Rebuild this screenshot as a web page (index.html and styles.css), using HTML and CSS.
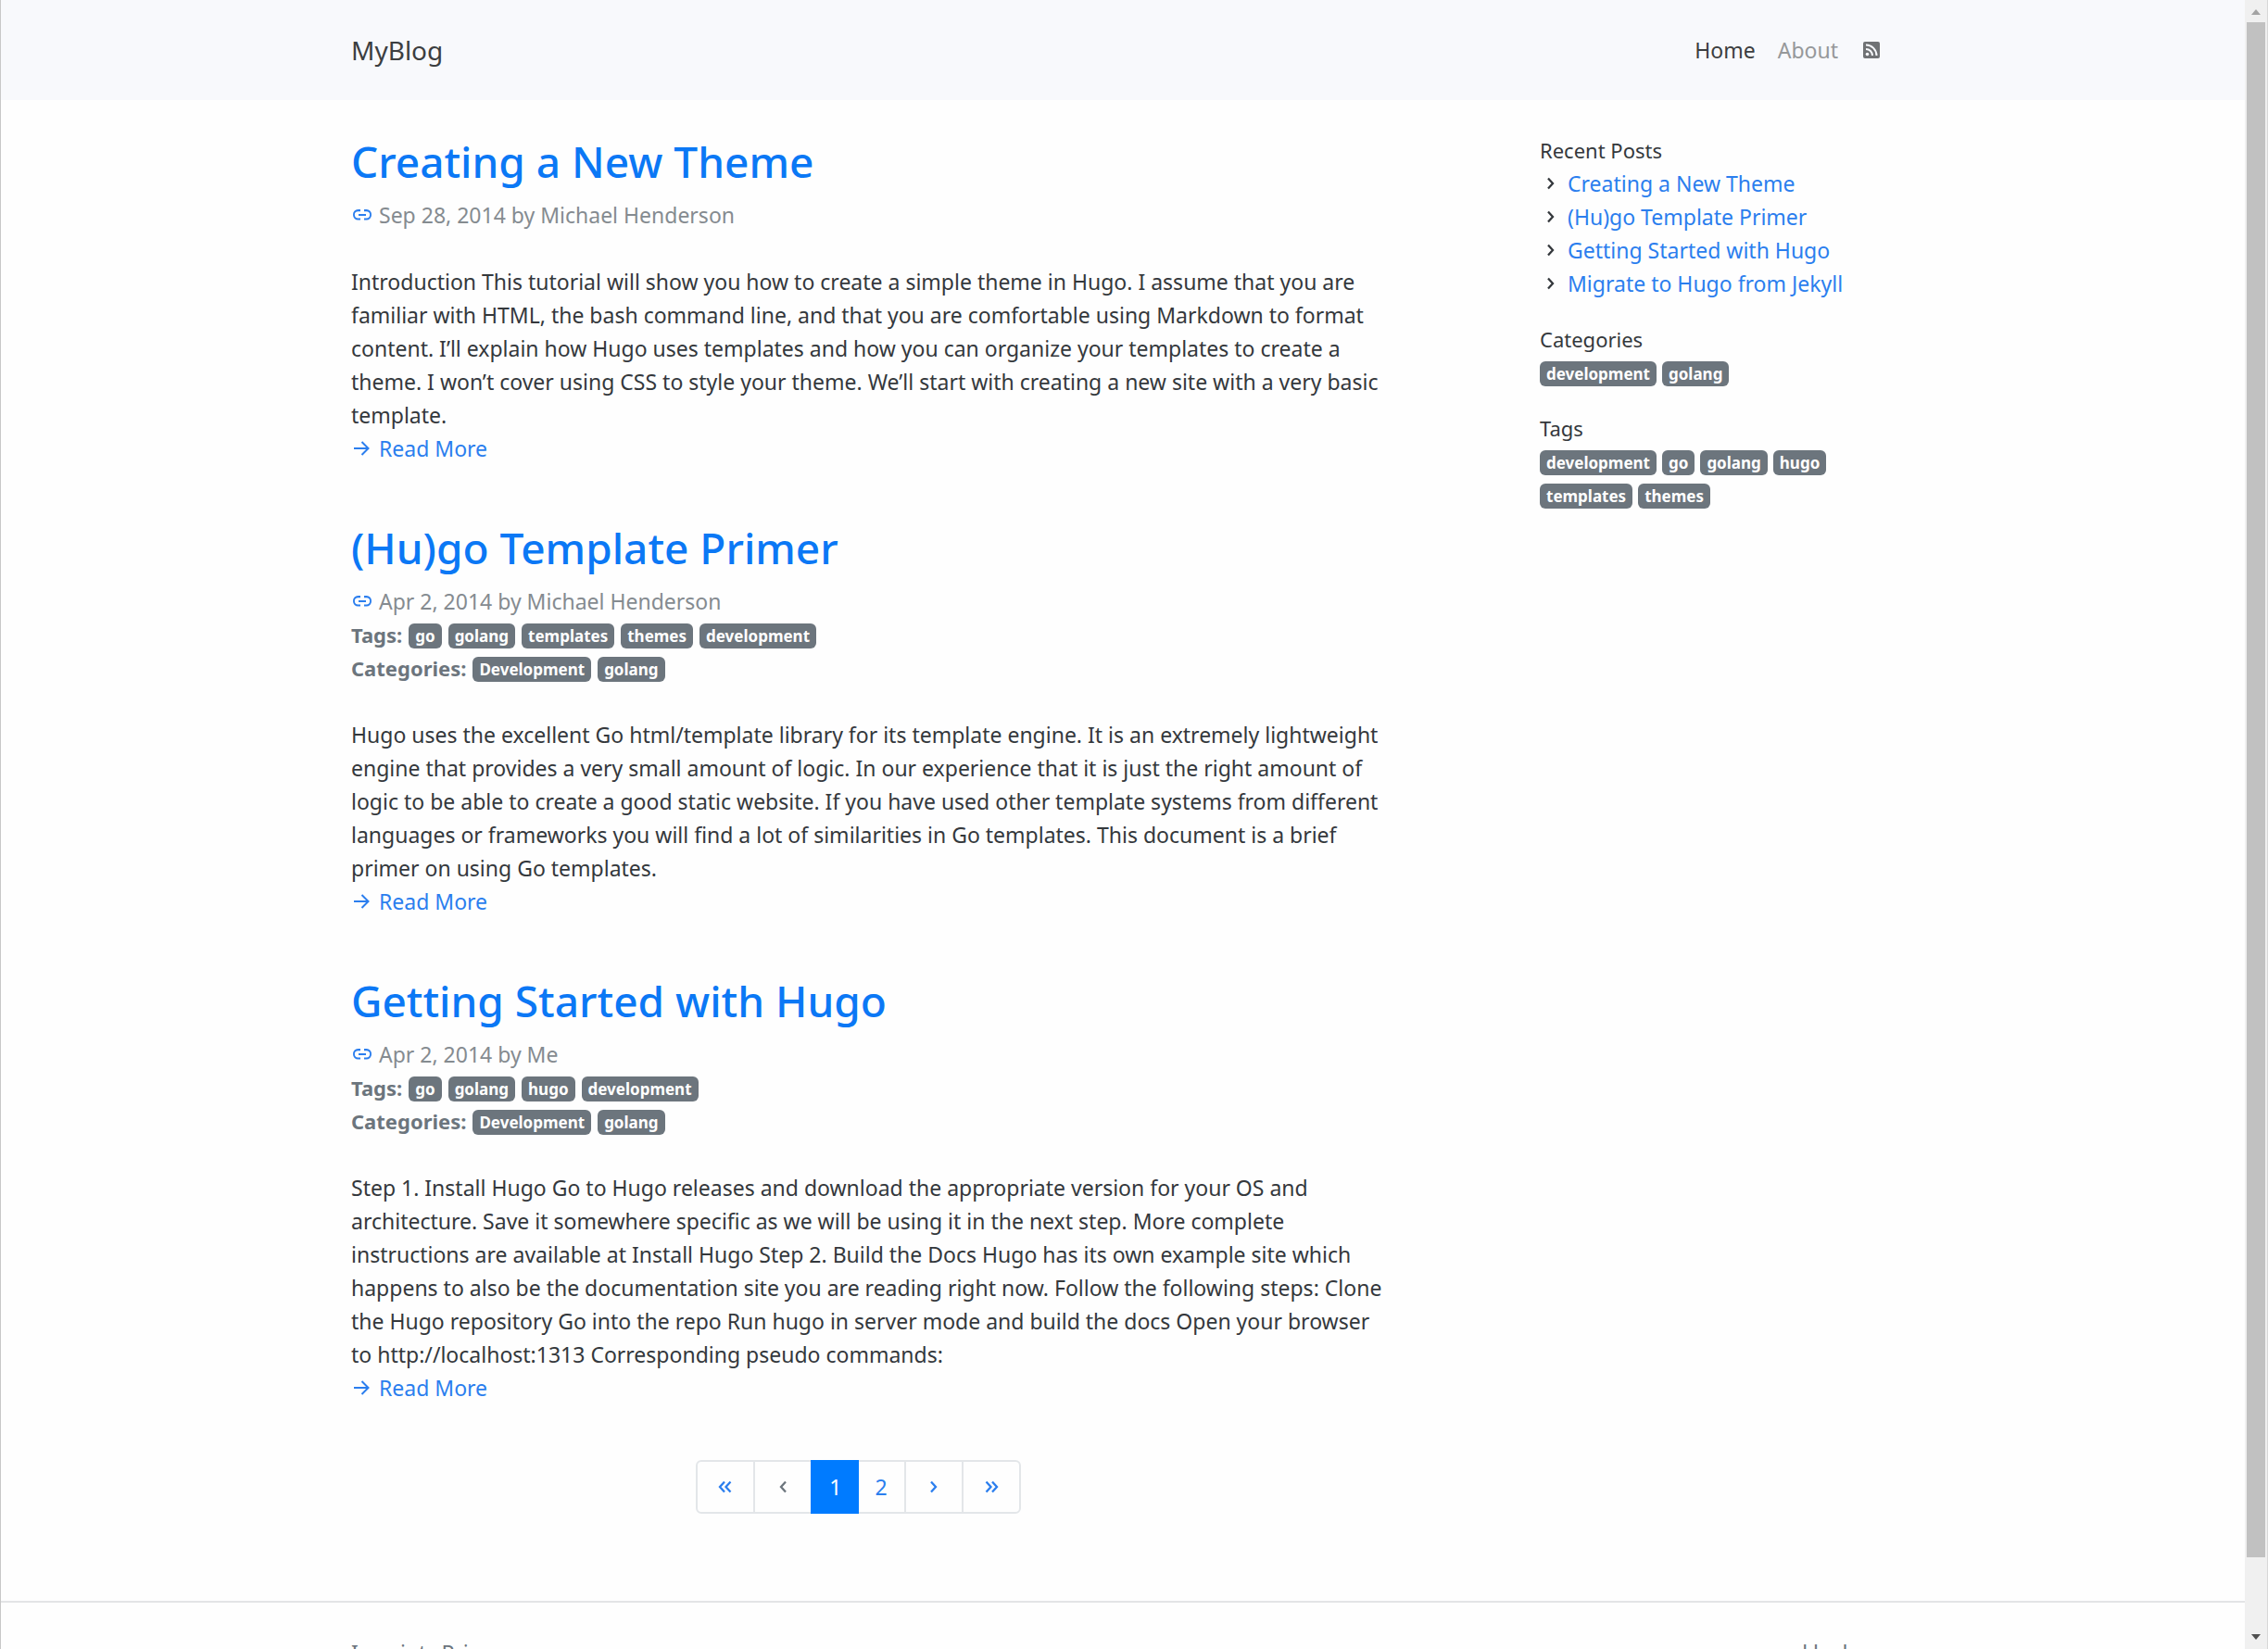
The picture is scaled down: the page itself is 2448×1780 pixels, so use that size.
FILE: index.html
```html
<!DOCTYPE html>
<html lang="en">
<head>
<meta charset="utf-8">
<meta name="viewport" content="width=device-width, initial-scale=1">
<title>MyBlog</title>
<link rel="stylesheet" href="styles.css">
</head>
<body>
<svg class="sprite" aria-hidden="true">
  <symbol id="link" viewBox="0 0 24 24"><path fill="currentColor" d="M10 6H7.500A5.500 5.500 0 0 0 2 12a5.500 5.500 0 0 0 5.500 5.500H10v-2H7.500a3.500 3.500 0 0 1 0-7.300H10zM14 6h2.500A5.500 5.500 0 0 1 22 12a5.500 5.500 0 0 1-5.500 5.500H14v-2h2.500a3.500 3.500 0 0 0 0-7.300H14zM8 11h8v2H8z"/></symbol>
  <symbol id="arrow" viewBox="0 0 24 24"><path fill="none" stroke="currentColor" stroke-width="2" d="M3 12h15M11.500 5l7 7-7 7"/></symbol>
  <symbol id="right" viewBox="0 0 24 24"><path fill="none" stroke="currentColor" stroke-width="2.300" d="M9 6.500l5 5.500-5 5.500"/></symbol>
  <symbol id="left" viewBox="0 0 24 24"><path fill="none" stroke="currentColor" stroke-width="2.300" d="M15 6.500l-5 5.500 5 5.500"/></symbol>
  <symbol id="first" viewBox="0 0 24 24"><path fill="none" stroke="currentColor" stroke-width="2.300" d="M11 6.500L6 12l5 5.500M17.500 6.500l-5 5.500 5 5.500"/></symbol>
  <symbol id="last" viewBox="0 0 24 24"><path fill="none" stroke="currentColor" stroke-width="2.300" d="M6.500 6.500l5 5.500-5 5.500M13 6.500l5 5.500-5 5.500"/></symbol>
  <symbol id="rss" viewBox="0 0 24 24"><rect x="3" y="3" width="18" height="18" rx="2" fill="currentColor"/><circle cx="7.500" cy="16.500" r="1.800" fill="#f8f9fc"/><path fill="none" stroke="#f8f9fc" stroke-width="2" d="M6 11a7 7 0 0 1 7 7M6 6.500A11.500 11.500 0 0 1 17.500 18"/></symbol>
</svg>
<div class="page">
  <header class="header">
    <div class="container header-row">
      <a class="brand" href="#">MyBlog</a>
      <nav class="nav" aria-label="Main">
        <a class="active" href="#">Home</a>
        <a href="#">About</a>
        <a class="feed" href="#" aria-label="RSS"><svg class="icon"><use href="#rss"/></svg></a>
      </nav>
    </div>
  </header>
  <div class="container columns">
    <main class="posts">
      <article>
        <h1><a href="#">Creating a New Theme</a></h1>
        <div class="meta">
          <div class="row"><a href="#" aria-label="Permalink"><svg class="icon"><use href="#link"/></svg></a>Sep 28, 2014 by Michael Henderson</div>
        </div>
        <p>Introduction This tutorial will show you how to create a simple theme in Hugo. I assume that you are familiar with HTML, the bash command line, and that you are comfortable using Markdown to format content. I’ll explain how Hugo uses templates and how you can organize your templates to create a theme. I won’t cover using CSS to style your theme. We’ll start with creating a new site with a very basic template.</p>
        <a class="row" href="#"><svg class="icon"><use href="#arrow"/></svg>Read More</a>
      </article>
      <article>
        <h1><a href="#">(Hu)go Template Primer</a></h1>
        <div class="meta">
          <div class="row"><a href="#" aria-label="Permalink"><svg class="icon"><use href="#link"/></svg></a>Apr 2, 2014 by Michael Henderson</div>
          <div class="row tags"><strong>Tags:</strong><a class="badge" href="#">go</a><a class="badge" href="#">golang</a><a class="badge" href="#">templates</a><a class="badge" href="#">themes</a><a class="badge" href="#">development</a></div>
          <div class="row tags"><strong>Categories:</strong><a class="badge" href="#">Development</a><a class="badge" href="#">golang</a></div>
        </div>
        <p>Hugo uses the excellent Go html/template library for its template engine. It is an extremely lightweight engine that provides a very small amount of logic. In our experience that it is just the right amount of logic to be able to create a good static website. If you have used other template systems from different languages or frameworks you will find a lot of similarities in Go templates. This document is a brief primer on using Go templates.</p>
        <a class="row" href="#"><svg class="icon"><use href="#arrow"/></svg>Read More</a>
      </article>
      <article>
        <h1><a href="#">Getting Started with Hugo</a></h1>
        <div class="meta">
          <div class="row"><a href="#" aria-label="Permalink"><svg class="icon"><use href="#link"/></svg></a>Apr 2, 2014 by Me</div>
          <div class="row tags"><strong>Tags:</strong><a class="badge" href="#">go</a><a class="badge" href="#">golang</a><a class="badge" href="#">hugo</a><a class="badge" href="#">development</a></div>
          <div class="row tags"><strong>Categories:</strong><a class="badge" href="#">Development</a><a class="badge" href="#">golang</a></div>
        </div>
        <p>Step 1. Install Hugo Go to Hugo releases and download the appropriate version for your OS and architecture. Save it somewhere specific as we will be using it in the next step. More complete instructions are available at Install Hugo Step 2. Build the Docs Hugo has its own example site which happens to also be the documentation site you are reading right now. Follow the following steps: Clone the Hugo repository Go into the repo Run hugo in server mode and build the docs Open your browser to http://localhost:1313 Corresponding pseudo commands:</p>
        <a class="row" href="#"><svg class="icon"><use href="#arrow"/></svg>Read More</a>
      </article>
      <nav class="pager" aria-label="Pages">
        <a href="#" aria-label="First"><svg class="icon"><use href="#first"/></svg></a>
        <a class="off" href="#" aria-label="Previous"><svg class="icon"><use href="#left"/></svg></a>
        <a class="current" href="#">1</a>
        <a href="#">2</a>
        <a href="#" aria-label="Next"><svg class="icon"><use href="#right"/></svg></a>
        <a href="#" aria-label="Last"><svg class="icon"><use href="#last"/></svg></a>
      </nav>
    </main>
    <aside class="sidebar">
      <section>
        <h2>Recent Posts</h2>
        <ul>
          <li class="row"><svg class="icon"><use href="#right"/></svg><a href="#">Creating a New Theme</a></li>
          <li class="row"><svg class="icon"><use href="#right"/></svg><a href="#">(Hu)go Template Primer</a></li>
          <li class="row"><svg class="icon"><use href="#right"/></svg><a href="#">Getting Started with Hugo</a></li>
          <li class="row"><svg class="icon"><use href="#right"/></svg><a href="#">Migrate to Hugo from Jekyll</a></li>
        </ul>
      </section>
      <section>
        <h2>Categories</h2>
        <div class="row"><a class="badge" href="#">development</a><a class="badge" href="#">golang</a></div>
      </section>
      <section>
        <h2>Tags</h2>
        <div class="row"><a class="badge" href="#">development</a><a class="badge" href="#">go</a><a class="badge" href="#">golang</a><a class="badge" href="#">hugo</a><a class="badge" href="#">templates</a><a class="badge" href="#">themes</a></div>
      </section>
    </aside>
  </div>
  <footer class="footer">
    <div class="container footer-row">
      <nav class="links" aria-label="Legal"><a href="#">Imprint</a><a href="#">Privacy</a></nav>
      <a href="#">powered by hugo</a>
    </div>
  </footer>
</div>
<div class="scrollbar" aria-hidden="true">
  <svg viewBox="0 0 24 24"><path d="M7 16l5-6 5 6z" fill="#a3a3a3"/></svg>
  <div class="track"><div class="thumb"></div></div>
  <svg viewBox="0 0 24 24"><path d="M7 8l5 6 5-6z" fill="#505050"/></svg>
</div>
</body>
</html>
```
FILE: styles.css
```css
* { box-sizing: border-box; }

body {
  margin: 0;
  display: flex;
  height: 100vh;
  overflow: hidden;
  font: 23px/36px "Segoe UI", "Noto Sans", sans-serif;
  color: #34383c;
  background: #fefefe;
}

a { color: #2b7eee; text-decoration: none; }
h1, h2, p, ul { margin: 0; padding: 0; font-weight: 400; }

.sprite { position: absolute; width: 0; height: 0; }
.icon { display: block; width: 24px; height: 24px; flex: none; }

.page { flex: 1; min-width: 0; border-left: 1px solid #c8c8c8; }
.container { max-width: 1710px; margin: 0 auto; padding: 0 22px; }

.header { background: #f8f9fc; padding: 24px 0; }
.header-row { display: flex; justify-content: space-between; align-items: center; height: 60px; }
.brand { font-size: 28px; color: #3c3e40; }
.nav { display: flex; align-items: center; gap: 24px; padding-right: 13px; }
.nav a { color: #96989a; }
.nav .active { color: #3c3e40; }
.nav .feed { color: #707274; }

.columns { display: flex; padding-top: 36px; }
.posts { width: 1095px; padding-top: 1px; }
.posts p { margin-right: -24px; }
.sidebar { width: 382px; margin-left: 188px; }

article { margin-bottom: 60px; }
h1 { font-size: 46px; line-height: 58px; font-weight: 500; margin-bottom: 11px; }
h1 a { color: #0b78f5; }
.meta { color: #858b90; margin-bottom: 36px; }
.meta strong { font-size: 22px; color: #6c757d; }

.row { display: flex; flex-wrap: wrap; align-items: center; column-gap: 6px; min-height: 36px; }
.tags { column-gap: 7px; }
.badge {
  padding: 0 7px;
  border-radius: 6px;
  background: #6c757d;
  color: #fff;
  font-size: 17px;
  line-height: 27px;
  font-weight: 700;
  margin: 6px 0 3px;
}

.pager { display: flex; width: max-content; margin: 0 auto; border: 2px solid #e3e6e9; border-radius: 6px; }
.pager a { display: flex; align-items: center; height: 54px; padding: 0 18px; border-left: 2px solid #e3e6e9; }
.pager a:first-child { border-left: 0; }
.pager .off { color: #6c757d; }
.pager .current { background: #007bff; color: #fff; margin: -2px 0; height: 58px; border-color: #007bff; }
.pager .current + a { border-left: 0; }

h2 { font-size: 22px; }
.sidebar section { margin-bottom: 24px; }

.footer { margin-top: 94px; border-top: 2px solid #e3e4e6; padding-top: 36px; }
.footer-row { display: flex; justify-content: space-between; }
.footer a { color: #6c757d; }
.links { display: flex; gap: 16px; }

.scrollbar { display: flex; flex-direction: column; width: 25px; background: #f0f0f0; border-right: 1px solid #d8d8d8; }
.scrollbar svg { width: 24px; height: 24px; }
.track { flex: 1; }
.thumb { height: calc(96% - 6px); margin: 0 2px; background: #c1c1c1; }
```
